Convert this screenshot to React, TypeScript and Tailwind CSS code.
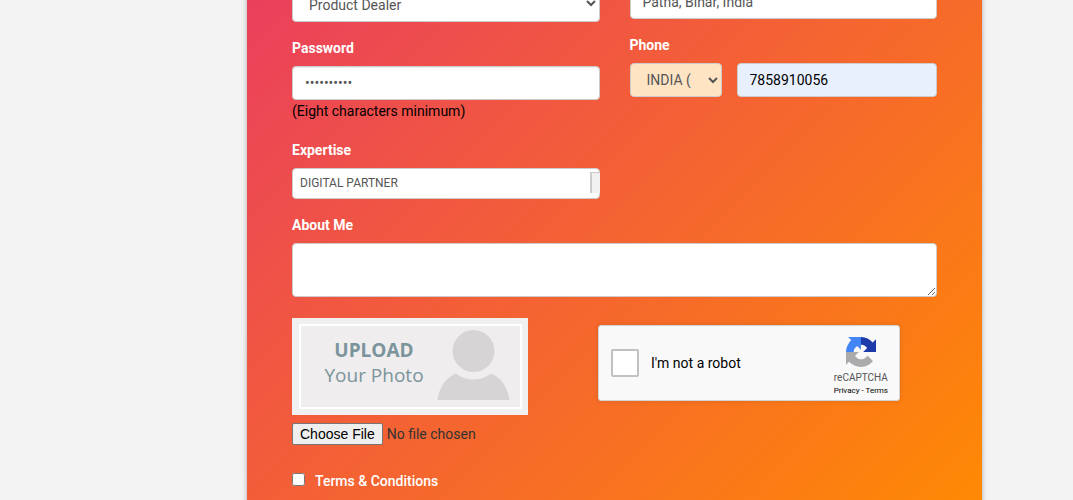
import { useState } from "react"

const label = "block text-sm leading-5 font-bold text-white mb-2"
const field = "block w-full h-[34px] px-3 text-sm text-[#555] bg-white border border-[#ccc] rounded-[4px] shadow-[inset_0_1px_1px_rgba(0,0,0,0.075)] outline-none"

function RecaptchaLogo() {
  return (
    <svg width="30" height="30" viewBox="0 0 64 64" aria-hidden="true">
      <path fill="#1c3aa9" d="M64 31.955l-.033-1.37V4.687l-7.16 7.16C50.948 4.674 42.033.093 32.05.093c-10.4 0-19.622 4.96-25.458 12.64l11.736 11.86a15.55 15.55 0 0 1 4.754-5.334c2.05-1.6 4.952-2.906 8.968-2.906.485 0 .86.057 1.135.163 4.976.393 9.288 3.14 11.828 7.124l-8.307 8.307L64 31.953" />
      <path fill="#4285f4" d="M31.862.094l-1.37.033H4.594l7.16 7.16C4.58 13.147 0 22.06 0 32.046c0 10.4 4.96 19.622 12.64 25.458L24.5 45.768a15.55 15.55 0 0 1-5.334-4.754c-1.6-2.05-2.906-4.952-2.906-8.968 0-.485.057-.86.163-1.135.393-4.976 3.14-9.288 7.124-11.828l8.307 8.307L31.86.095" />
      <path fill="#ababab" d="M.001 32.045l.033 1.37v25.898l7.16-7.16c5.86 7.173 14.774 11.754 24.76 11.754 10.4 0 19.622-4.96 25.458-12.64l-11.736-11.86a15.55 15.55 0 0 1-4.754 5.334c-2.05 1.6-4.952 2.906-8.968 2.906-.485 0-.86-.057-1.135-.163-4.976-.393-9.288-3.14-11.828-7.124l8.307-8.307c-10.522.04-22.4.066-27.295-.005" />
    </svg>
  )
}

function PhotoPlaceholder() {
  return (
    <div className="w-[236px] h-[97px] bg-[#f1f0f1] p-[6px] pl-[7px]">
      <div className="h-full border-2 border-white bg-[#efedee] flex items-start font-['Open_Sans',sans-serif] text-[19px] leading-[25px] text-[#7b949b]">
        <div className="w-[136px] pt-3 pl-[10px] text-center whitespace-nowrap">
          <div className="font-bold">UPLOAD</div>
          <div>Your Photo</div>
        </div>
        <svg className="shrink-0 mt-1" width="73" height="70" viewBox="0 0 73 70" fill="#d6d4d5" aria-hidden="true">
          <circle cx="36.5" cy="21" r="21" />
          <path d="M.5 70C2 58 9 47 19 43.5C29 51.5 44 51.5 54 43.5C64 47 71 58 72.500 70Z" />
        </svg>
      </div>
    </div>
  )
}

export default function App() {
  const [phone, setPhone] = useState("7858910056")
  const [password, setPassword] = useState("password12")
  const [location, setLocation] = useState("Patna, Bihar, India")

  return (
    <div className="h-screen overflow-hidden bg-[#f3f3f3] pl-[247px] pr-[91px] font-[Roboto,sans-serif] text-sm text-[#333]">
      <form className="min-h-screen px-[45px] pb-6 bg-[linear-gradient(135deg,#ea3f5e,#ff8a03)] shadow-[0_0_5px_rgba(0,0,0,0.3)]">
        <div className="-mt-[15px] grid grid-cols-2 gap-x-[30px]">
          <div>
            <select aria-label="Member type" className={`${field} h-[37px] pt-[2px]`}>
              <option>Product Dealer</option>
            </select>

            <div className="mt-4">
              <label htmlFor="password" className={label}>Password</label>
              <input id="password" type="password" className={field} value={password} onChange={e => setPassword(e.target.value)} />
              <p className="leading-[22px] text-black">(Eight characters minimum)</p>
            </div>

            <div className="mt-[18px]">
              <label htmlFor="expertise" className={label}>Expertise</label>
              <div className="relative">
                <select id="expertise" className="block w-full h-[31px] appearance-none px-[7px] pb-[2px] text-xs text-[#555] bg-white border border-[#ccc] rounded-[4px] outline-none">
                  <option>DIGITAL PARTNER</option>
                </select>
                <span className="absolute right-0 top-1 w-[10px] h-[21px] bg-[#f0f0f0] border-l-2 border-t border-[#ccc]" />
              </div>
            </div>
          </div>

          <div>
            <input aria-label="Location" className={field} value={location} onChange={e => setLocation(e.target.value)} />

            <div className="mt-4">
              <label htmlFor="phone" className={label}>Phone</label>
              <div className="flex gap-[15px]">
                <select aria-label="Country code" className="w-[92px] h-[34px] px-3 text-sm text-[#555] bg-[#ffe4c4] border border-[#ccc] rounded-[4px] outline-none">
                  <option>INDIA (</option>
                </select>
                <input
                  id="phone"
                  type="tel"
                  className="flex-1 min-w-0 h-[34px] px-3 text-sm text-black bg-[#e8f0fe] border border-[#ccc] rounded-[4px] outline-none"
                  value={phone}
                  onChange={e => setPhone(e.target.value)}
                />
              </div>
            </div>
          </div>
        </div>

        <div className="mt-4">
          <label htmlFor="about" className={label}>About Me</label>
          <textarea id="about" className="block w-full h-[54px] px-3 py-1.5 text-[#555] bg-white border border-[#ccc] rounded-[4px] outline-none" />
        </div>

        <div className="mt-[21px] flex items-start gap-[70px]">
          <div>
            <PhotoPlaceholder />
            <input
              type="file"
              aria-label="Upload your photo"
              className="block mt-2 w-[236px] h-[22px] leading-5 file:h-[22px] file:mr-1 file:px-[7px] file:font-['Liberation_Sans',sans-serif] file:bg-[#efefef] file:text-black file:border file:border-solid file:border-[#767676] file:rounded-[2px]"
            />
          </div>

          {/* reCAPTCHA box */}
          <div className="mt-[7px] w-[302px] h-[76px] flex items-center pl-3 pr-[11px] bg-[#f9f9f9] border border-[#d3d3d3] rounded-[3px] shadow-[0_0_4px_1px_rgba(0,0,0,0.08)]">
            <input id="robot" type="checkbox" className="appearance-none w-7 h-7 bg-white border-2 border-[#c1c1c1] rounded-[2px]" />
            <label htmlFor="robot" className="ml-3 flex-1 text-black">I'm not a robot</label>
            <div className="pt-[6px] flex flex-col items-center text-[#555]">
              <RecaptchaLogo />
              <div className="mt-1 text-[10px] leading-[14px]">reCAPTCHA</div>
              <div className="text-[8px] leading-[11px] text-black">
                <a href="#privacy">Privacy</a> - <a href="#terms">Terms</a>
              </div>
            </div>
          </div>
        </div>

        <div className="mt-[26px] flex items-start">
          <input id="terms" type="checkbox" className="mt-[2px] w-[13px] h-[13px]" />
          <label htmlFor="terms" className="ml-[10px] leading-5 font-medium text-white">Terms &amp; Conditions</label>
        </div>
      </form>
    </div>
  )
}
